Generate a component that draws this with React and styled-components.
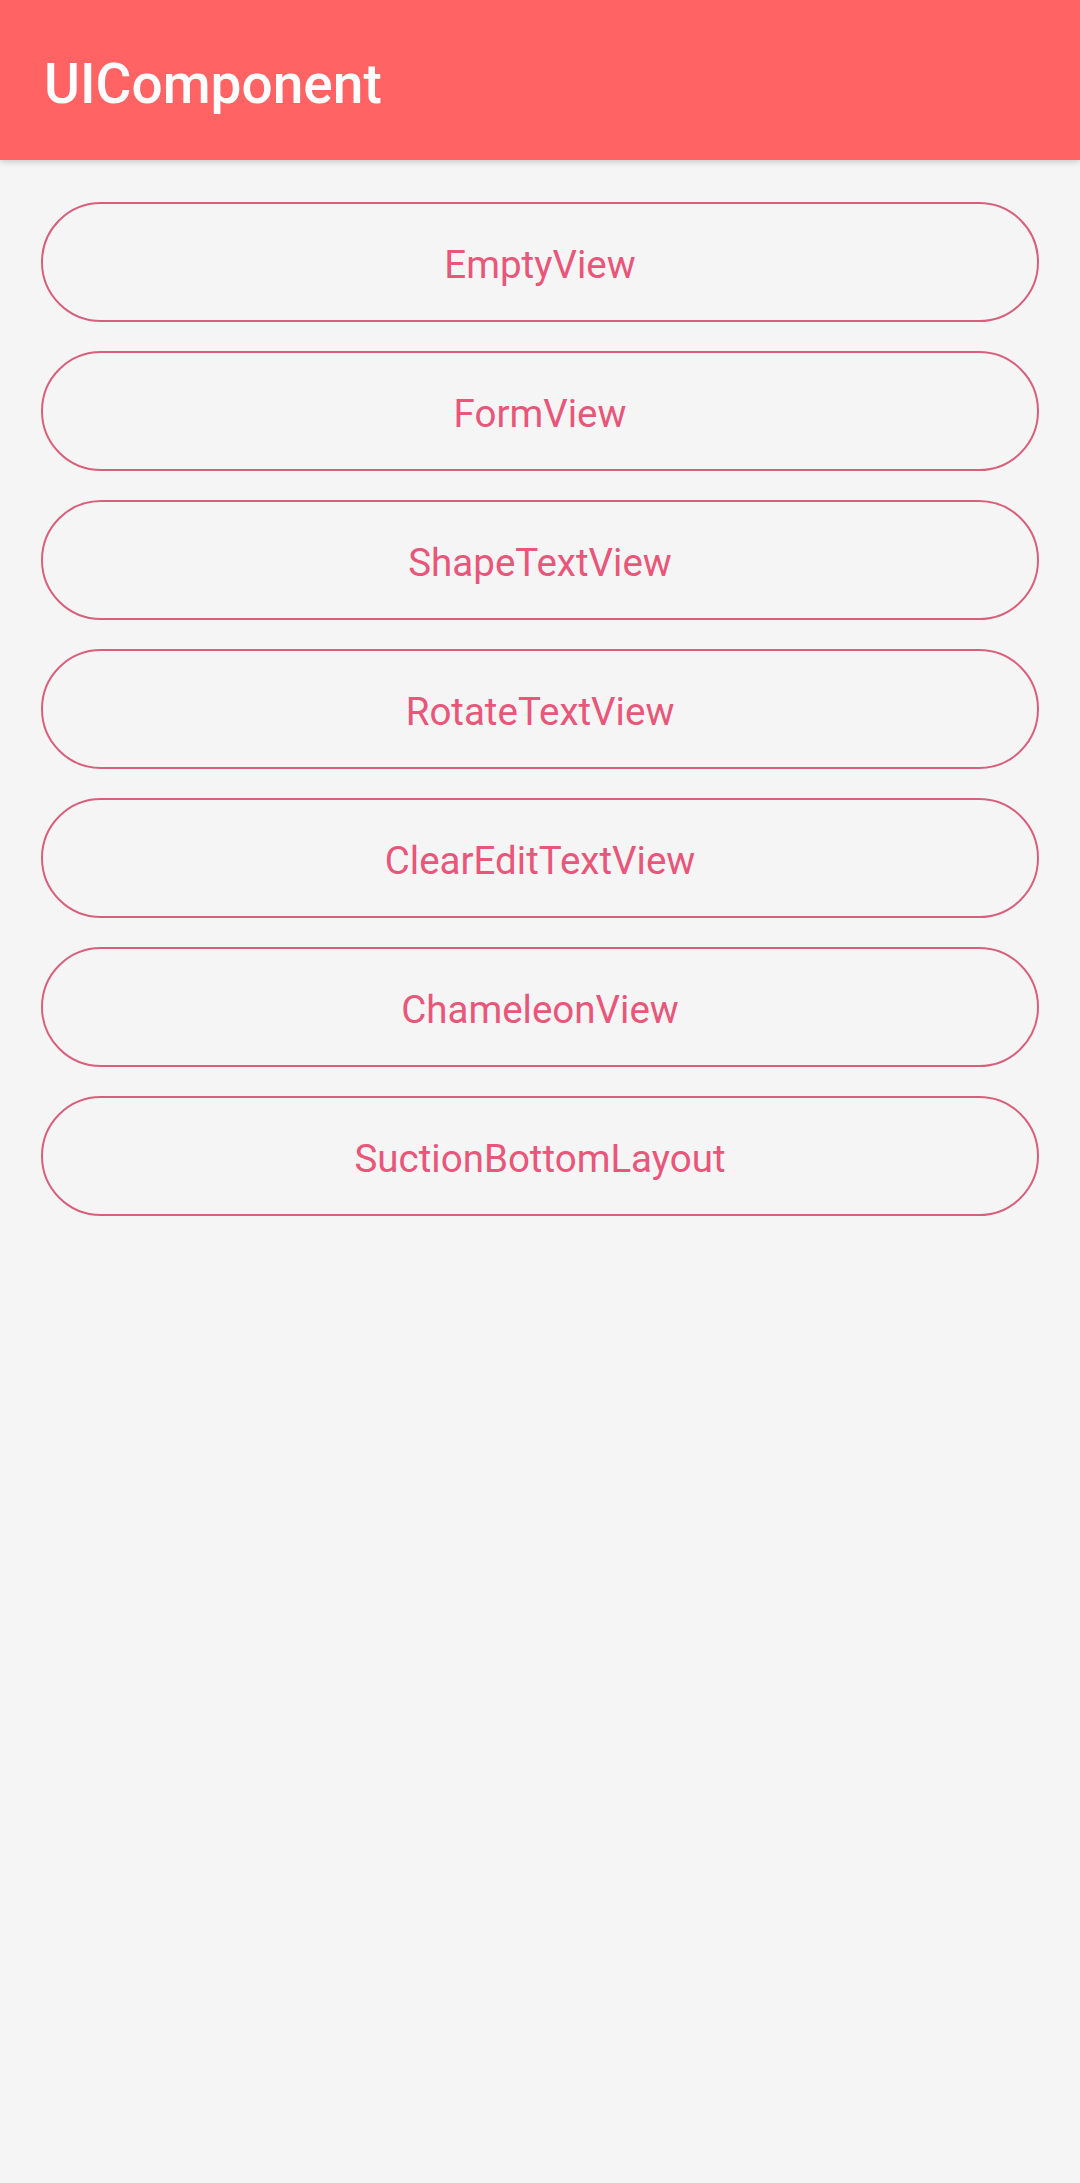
import React from 'react'
import styled, { createGlobalStyle } from 'styled-components'

const GlobalStyle = createGlobalStyle`
    html, body {
        margin: 0;
        padding: 0;
        background-color: #F5F5F5;
        font-family: Roboto, "Noto Sans", sans-serif;
    }
`

const Page = styled.div`
    width: 1080px;
    min-height: 2183px;
    background-color: #F5F5F5;
`

const Toolbar = styled.header`
    height: 160px;
    background-color: #FF6363;
    display: flex;
    align-items: center;
    padding: 8px 0 0 44px;
    box-sizing: border-box;
    box-shadow: 0 2px 6px rgba(0, 0, 0, 0.18);
    position: relative;
`

const Title = styled.h1`
    margin: 0;
    color: #FFFFFF;
    font-size: 55px;
    font-weight: 500;
    letter-spacing: 0;
`

const ButtonList = styled.div`
    display: flex;
    flex-direction: column;
    gap: 29px;
    padding: 42px 41px 0;
`

const OutlineButton = styled.button`
    height: 120px;
    width: 100%;
    border: 2px solid #D8607C;
    border-radius: 60px;
    background-color: transparent;
    color: #E8567A;
    font-family: Roboto, "Noto Sans", sans-serif;
    font-size: 38.5px;
    font-weight: 400;
    padding: 4px 0 0;
    cursor: pointer;
`

const items = [
    'EmptyView',
    'FormView',
    'ShapeTextView',
    'RotateTextView',
    'ClearEditTextView',
    'ChameleonView',
    'SuctionBottomLayout',
]

export default function App() {
    return (
        <>
            <GlobalStyle />
            <Page>
                <Toolbar>
                    <Title>UIComponent</Title>
                </Toolbar>
                <ButtonList>
                    {items.map((name) => (
                        <OutlineButton key={name}>{name}</OutlineButton>
                    ))}
                </ButtonList>
            </Page>
        </>
    )
}
